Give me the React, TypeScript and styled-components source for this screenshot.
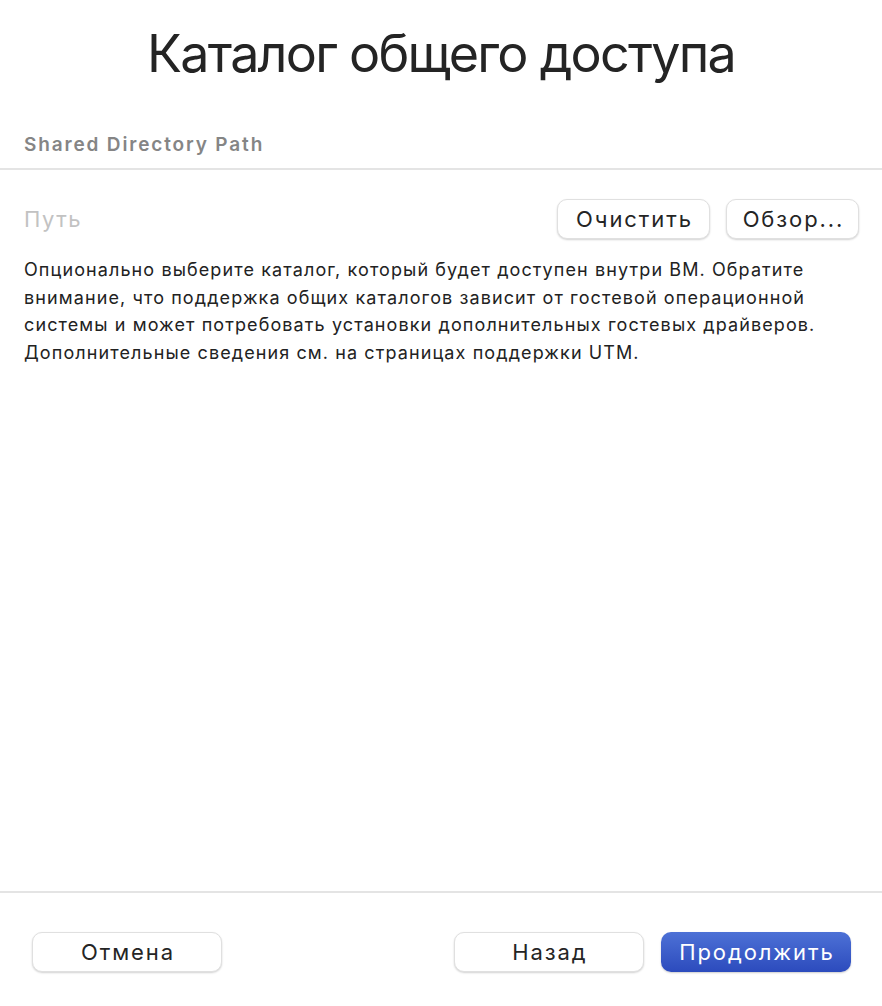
import React from "react";
import styled, { createGlobalStyle } from "styled-components";

const Global = createGlobalStyle`
  html, body { margin: 0; padding: 0; background: #ffffff; }
  body { font-family: Inter, "Noto Sans", "Liberation Sans", sans-serif; color: #222222; -webkit-font-smoothing: antialiased; }
  * { box-sizing: border-box; }
`;

const Window = styled.div`
  display: flex;
  flex-direction: column;
  height: 1006px;
  width: 882px;
  background: #ffffff;
`;

const Title = styled.h1`
  margin: 0;
  padding-top: 23px;
  height: 112px;
  font-size: 52px;
  line-height: 62px;
  font-weight: 400;
  text-align: center;
  color: #242424;
  letter-spacing: -1.75px;
`;

const SectionLabel = styled.div`
  padding: 0 24px;
  height: 58px;
  padding-top: 21px;
  font-size: 19px;
  line-height: 24px;
  font-weight: 600;
  letter-spacing: 1.85px;
  color: #858585;
  border-bottom: 2px solid #e4e4e4;
`;

const Content = styled.div`
  padding: 29px 23px 0 24px;
  display: flex;
  flex-direction: column;
  gap: 17px;
`;

const PathRow = styled.div`
  display: flex;
  align-items: center;
  gap: 16px;
`;

const Placeholder = styled.div`
  flex: 1;
  font-size: 22px;
  letter-spacing: 1.5px;
  color: #c2c2c2;
`;

const Button = styled.button<{ $primary?: boolean; $width?: number }>`
  height: 40px;
  ${(p) => (p.$width ? `width: ${p.$width}px;` : "padding: 0 16px;")}
  border-radius: 10px;
  font-family: inherit;
  font-size: 22px;
  font-weight: 400;
  letter-spacing: 1.9px;
  text-indent: 1.9px;
  display: inline-flex;
  align-items: center;
  justify-content: center;
  cursor: default;
  ${(p) =>
    p.$primary
      ? `
    color: #ffffff;
    border: none;
    background: linear-gradient(#4d71d6, #2c4bbd);
    box-shadow: 0 1px 2px rgba(0,0,0,0.2);
  `
      : `
    color: #242424;
    background: #ffffff;
    border: 1px solid #e0e0e0;
    box-shadow: 0 1px 2px rgba(0,0,0,0.18);
  `}
`;

const Description = styled.p`
  margin: 0;
  font-size: 18px;
  line-height: 27.6px;
  letter-spacing: 1.1px;
  color: #222222;
  max-width: 840px;
`;

const Spacer = styled.div`
  flex: 1;
`;

const Footer = styled.div`
  border-top: 2px solid #e4e4e4;
  padding: 39px 31px 0 32px;
  height: 115px;
  display: flex;
  align-items: flex-start;
  gap: 17px;
`;

const FooterGap = styled.div`
  flex: 1;
`;

export default function App() {
  return (
    <>
      <Global />
      <Window>
        <Title>Каталог общего доступа</Title>
        <SectionLabel>Shared Directory Path</SectionLabel>
        <Content>
          <PathRow>
            <Placeholder>Путь</Placeholder>
            <Button $width={153}>Очистить</Button>
            <Button $width={133}>Обзор...</Button>
          </PathRow>
          <Description>
            Опционально выберите каталог, который будет доступен внутри ВМ. Обратите внимание, что поддержка общих
            каталогов зависит от гостевой операционной системы и может потребовать установки дополнительных гостевых
            драйверов. Дополнительные сведения см. на страницах поддержки UTM.
          </Description>
        </Content>
        <Spacer />
        <Footer>
          <Button $width={190}>Отмена</Button>
          <FooterGap />
          <Button $width={190}>Назад</Button>
          <Button $width={190} $primary>
            Продолжить
          </Button>
        </Footer>
      </Window>
    </>
  );
}
